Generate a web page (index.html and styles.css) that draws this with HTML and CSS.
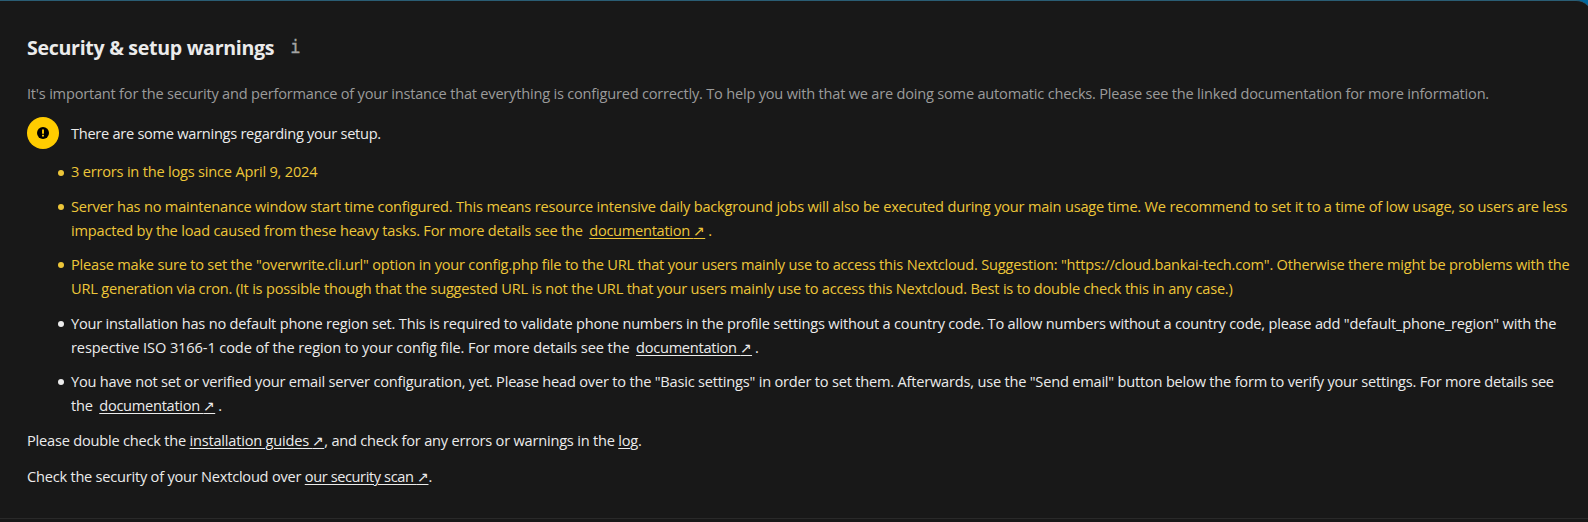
FILE: index.html
```html
<!DOCTYPE html>
<html lang="en">
<head>
<meta charset="utf-8">
<title>Security &amp; setup warnings</title>
<link rel="stylesheet" href="styles.css">
</head>
<body>
<main class="content">
  <section class="section">
    <header class="heading">
      <h2 class="title">Security &amp; setup warnings</h2>
      <a class="info">i</a>
    </header>
    <p class="hint">It's important for the security and performance of your instance that everything is configured correctly. To help you with that we are doing some automatic checks. Please see the linked documentation for more information.</p>
    <div class="status">
      <span class="status-icon"><svg viewBox="0 0 12 12" width="12" height="12"><circle cx="6" cy="6" r="6" fill="#000"/><path d="M6 2.5v4.2M6 7.8v1.8" stroke="#fc0" stroke-width="1.9"/></svg></span>
      <span class="status-text">There are some warnings regarding your setup.</span>
    </div>
    <ul class="list">
      <li class="item warning">3 errors in the logs since April 9, 2024</li>
      <li class="item warning">Server has no maintenance window start time configured. This means resource intensive daily background jobs will also be executed during your main usage time. We recommend to set it to a time of low usage, so users are less<br>impacted by the load caused from these heavy tasks. For more details see the<a class="link doc">documentation <span class="arrow">↗</span></a>.</li>
      <li class="item warning url">Please make sure to set the "overwrite.cli.url" option in your config.php file to the URL that your users mainly use to access this Nextcloud. Suggestion: "https://cloud.bankai-tech.com". Otherwise there might be problems with the<br>URL generation via cron. (It is possible though that the suggested URL is not the URL that your users mainly use to access this Nextcloud. Best is to double check this in any case.)</li>
      <li class="item">Your installation has no default phone region set. This is required to validate phone numbers in the profile settings without a country code. To allow numbers without a country code, please add "default_phone_region" with the<br><span class="loose">respective ISO 3166-1 code of the region to your config file. For more details see the</span><a class="link doc">documentation <span class="arrow">↗</span></a>.</li>
      <li class="item">You have not set or verified your email server configuration, yet. Please head over to the "Basic settings" in order to set them. Afterwards, use the "Send email" button below the form to verify your settings. For more details see<br>the<a class="link doc">documentation <span class="arrow">↗</span></a>.</li>
    </ul>
    <p class="note">Please double check the <a class="link">installation guides <span class="arrow">↗</span></a>, and check for any errors or warnings in the <a class="link">log</a>.</p>
    <p class="note scan">Check the security of your Nextcloud over <a class="link">our security scan <span class="arrow">↗</span></a>.</p>
  </section>
</main>
</body>
</html>
```
FILE: styles.css
```css
* { box-sizing: border-box; }
body { margin: 0; background: #00679e; color: #ebebeb; font: 14.6px/24.4px "Open Sans", "Noto Sans", sans-serif; letter-spacing: -0.207px; height: 522px; overflow: hidden; white-space: nowrap; }
.content { width: calc(100% + 4px); height: 522px; background: #181818; border-top: 1px solid #2a5d74; border-radius: 0 16px 0 0; }
.section { height: 518px; padding: 32px 0 0 27px; border-bottom: 1px solid #292929; }
.heading { display: flex; gap: 16px; height: 30px; align-items: center; }
.title { margin: 0; font-size: 19.6px; line-height: 30px; font-weight: 700; letter-spacing: -0.31px; }
.info { color: #a3a3a3; font: 17px/28px "DejaVu Sans Mono", monospace; -webkit-text-stroke: 0.3px #a3a3a3; align-self: flex-start; }
.hint { margin: 18px 0 0; color: #9b9b9b; letter-spacing: -0.215px; }
.status { display: flex; align-items: center; gap: 12px; margin-top: 12px; height: 32px; }
.status-icon { width: 32px; height: 32px; border-radius: 50%; background: #fc0; display: grid; place-items: center; }
.status-text { letter-spacing: -0.277px; }
.list { margin: 10px 0 0; padding: 0 0 0 71px; margin-left: -27px; list-style: none; }
.item { margin-bottom: 9.7px; }
.item::before { content: ""; display: inline-block; width: 6px; height: 6px; border-radius: 50%; margin: 0 7px 0 -13px; vertical-align: 1.6px; background: currentColor; }
.warning { color: #edc639; }
.url { letter-spacing: -0.214px; }
.loose { letter-spacing: -0.115px; }
.link { text-decoration: underline; text-underline-offset: 2px; text-decoration-thickness: 1px; }
.arrow { font-size: 13.5px; line-height: 0; }
.doc { margin: 0 3px 0 6.5px; letter-spacing: -0.27px; }
.note { margin: 0; letter-spacing: -0.215px; }
.scan { margin-top: 12px; letter-spacing: -0.23px; }
.scan .link { letter-spacing: -0.4px; }
```
